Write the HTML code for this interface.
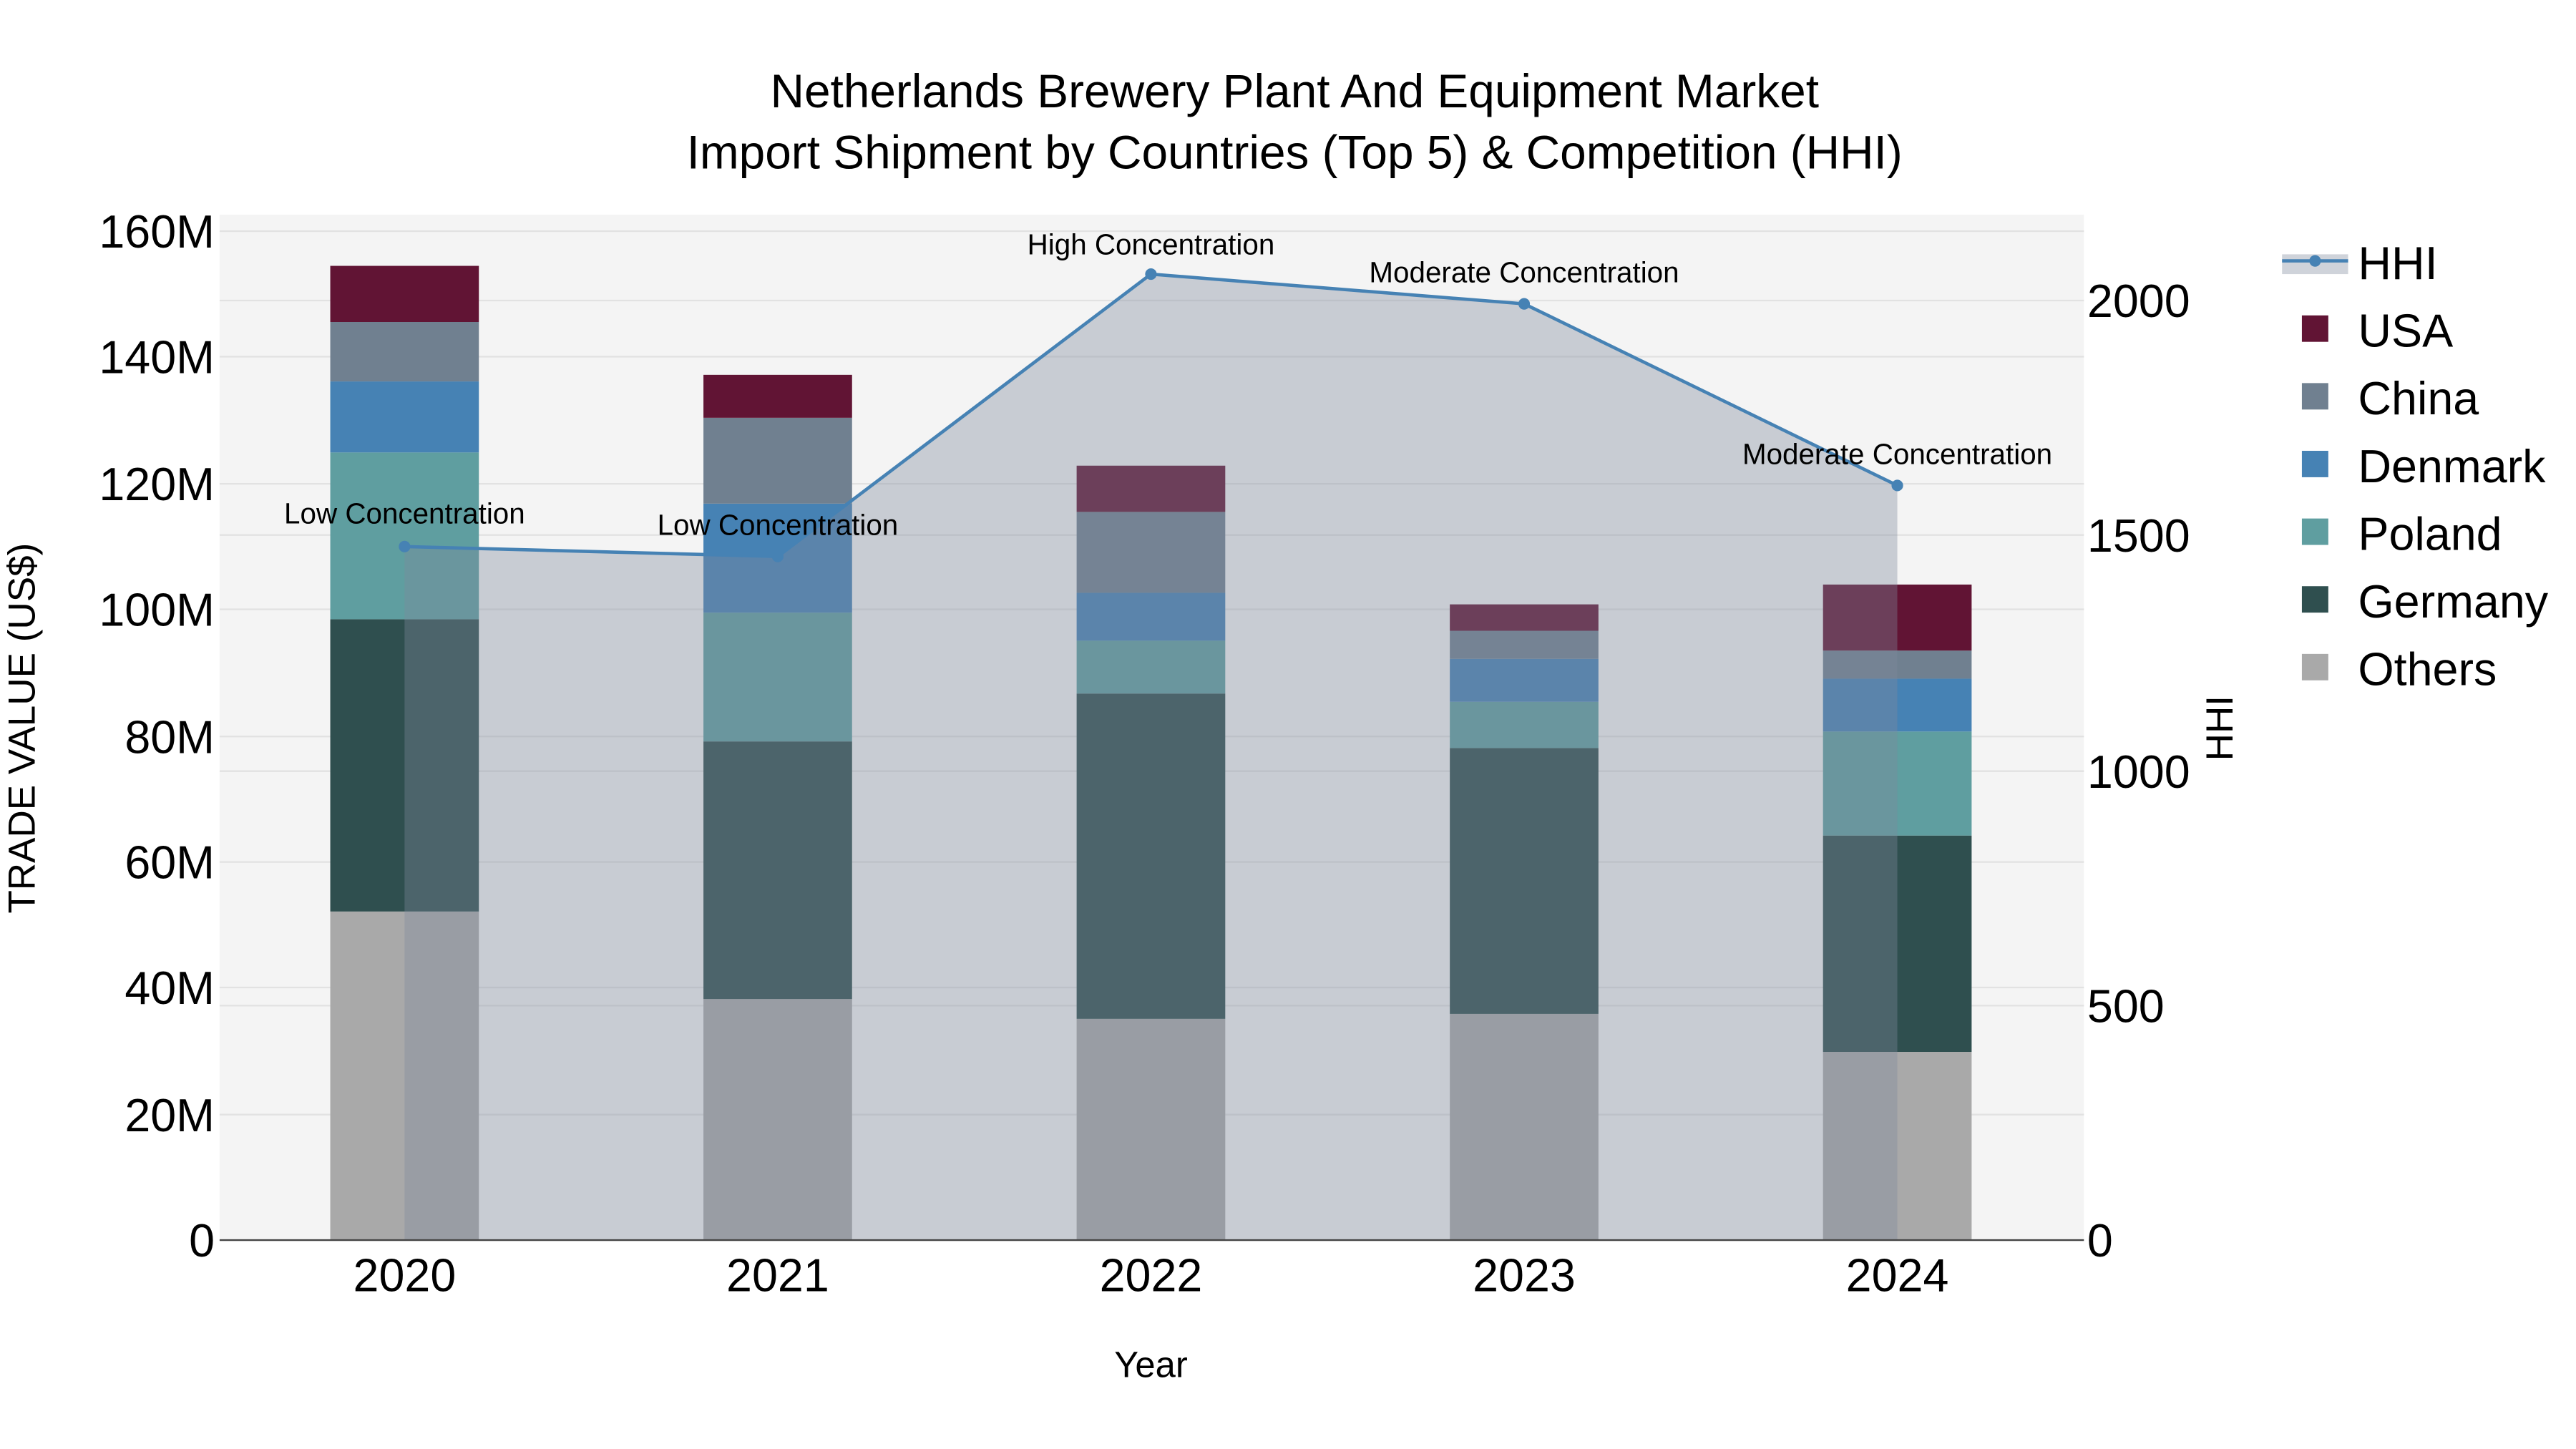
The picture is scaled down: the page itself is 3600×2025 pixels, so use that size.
<!DOCTYPE html>
<html><head><meta charset="utf-8"><style>html,body{margin:0;padding:0;background:#fff}svg{display:block}</style></head>
<body>
<svg width="3600" height="2025" viewBox="0 0 1560 877.5" xmlns="http://www.w3.org/2000/svg" font-family="Liberation Sans, sans-serif">
<rect x="0" y="0" width="1560" height="877.5" fill="#fff"/>
<rect x="133" y="130" width="1129" height="621" fill="#f4f4f4"/>
<g stroke="#e2e2e2" stroke-width="1">
<line x1="133" x2="1262" y1="675" y2="675"/><line x1="133" x2="1262" y1="598" y2="598"/><line x1="133" x2="1262" y1="522" y2="522"/><line x1="133" x2="1262" y1="446" y2="446"/><line x1="133" x2="1262" y1="369" y2="369"/><line x1="133" x2="1262" y1="293" y2="293"/><line x1="133" x2="1262" y1="216" y2="216"/><line x1="133" x2="1262" y1="140" y2="140"/>
<line x1="133" x2="1262" y1="609" y2="609"/><line x1="133" x2="1262" y1="467" y2="467"/><line x1="133" x2="1262" y1="324" y2="324"/><line x1="133" x2="1262" y1="182" y2="182"/>
</g>
<g>
<rect x="200" y="552" width="90" height="199" fill="#a9a9a9"/><rect x="200" y="375" width="90" height="177" fill="#2f4f4f"/><rect x="200" y="274" width="90" height="101" fill="#5f9ea0"/><rect x="200" y="231" width="90" height="43" fill="#4682b4"/><rect x="200" y="195" width="90" height="36" fill="#708090"/><rect x="200" y="161" width="90" height="34" fill="#611434"/>
<rect x="426" y="605" width="90" height="146" fill="#a9a9a9"/><rect x="426" y="449" width="90" height="156" fill="#2f4f4f"/><rect x="426" y="371" width="90" height="78" fill="#5f9ea0"/><rect x="426" y="305" width="90" height="66" fill="#4682b4"/><rect x="426" y="253" width="90" height="52" fill="#708090"/><rect x="426" y="227" width="90" height="26" fill="#611434"/>
<rect x="652" y="617" width="90" height="134" fill="#a9a9a9"/><rect x="652" y="420" width="90" height="197" fill="#2f4f4f"/><rect x="652" y="388" width="90" height="32" fill="#5f9ea0"/><rect x="652" y="359" width="90" height="29" fill="#4682b4"/><rect x="652" y="310" width="90" height="49" fill="#708090"/><rect x="652" y="282" width="90" height="28" fill="#611434"/>
<rect x="878" y="614" width="90" height="137" fill="#a9a9a9"/><rect x="878" y="453" width="90" height="161" fill="#2f4f4f"/><rect x="878" y="425" width="90" height="28" fill="#5f9ea0"/><rect x="878" y="399" width="90" height="26" fill="#4682b4"/><rect x="878" y="382" width="90" height="17" fill="#708090"/><rect x="878" y="366" width="90" height="16" fill="#611434"/>
<rect x="1104" y="637" width="90" height="114" fill="#a9a9a9"/><rect x="1104" y="506" width="90" height="131" fill="#2f4f4f"/><rect x="1104" y="443" width="90" height="63" fill="#5f9ea0"/><rect x="1104" y="411" width="90" height="32" fill="#4682b4"/><rect x="1104" y="394" width="90" height="17" fill="#708090"/><rect x="1104" y="354" width="90" height="40" fill="#611434"/>
</g>
<polygon points="245,751 245,331 471,337 697,166 923,184 1149,294 1149,751" fill="rgb(126,137,155)" fill-opacity="0.373"/>
<polyline points="245,331 471,337 697,166 923,184 1149,294" fill="none" stroke="#4682b4" stroke-width="2"/>
<g fill="#4682b4"><circle cx="245" cy="331" r="3.5"/><circle cx="471" cy="337" r="3.5"/><circle cx="697" cy="166" r="3.5"/><circle cx="923" cy="184" r="3.5"/><circle cx="1149" cy="294" r="3.5"/></g>
<line x1="133" x2="1262" y1="751" y2="751" stroke="#444" stroke-width="1"/>
<g font-size="17.5" fill="#000" text-anchor="middle">
<text x="245" y="317">Low Concentration</text><text x="471" y="324">Low Concentration</text><text x="697" y="154">High Concentration</text><text x="923" y="171">Moderate Concentration</text><text x="1149" y="281">Moderate Concentration</text>
</g>
<g font-size="28" fill="#000" text-anchor="end">
<text x="130" y="761">0</text><text x="130" y="685">20M</text><text x="130" y="608">40M</text><text x="130" y="532">60M</text><text x="130" y="456">80M</text><text x="130" y="379">100M</text><text x="130" y="303">120M</text><text x="130" y="226">140M</text><text x="130" y="150">160M</text>
</g>
<g font-size="28" fill="#000" text-anchor="start">
<text x="1264" y="761">0</text><text x="1264" y="619">500</text><text x="1264" y="477">1000</text><text x="1264" y="334">1500</text><text x="1264" y="192">2000</text>
</g>
<g font-size="28" fill="#000" text-anchor="middle">
<text x="245" y="782">2020</text><text x="471" y="782">2021</text><text x="697" y="782">2022</text><text x="923" y="782">2023</text><text x="1149" y="782">2024</text>
</g>
<text x="697" y="834" font-size="22" text-anchor="middle">Year</text>
<text transform="translate(21,441) rotate(-90)" font-size="23" text-anchor="middle">TRADE VALUE (US$)</text>
<text transform="translate(1352,441) rotate(-90)" font-size="23" text-anchor="middle">HHI</text>
<text x="784" y="65" font-size="28.5" text-anchor="middle">Netherlands Brewery Plant And Equipment Market</text>
<text x="784" y="102" font-size="28.5" text-anchor="middle">Import Shipment by Countries (Top 5) &amp; Competition (HHI)</text>
<rect x="1382" y="154" width="40" height="12" fill="rgb(126,137,155)" fill-opacity="0.373"/>
<line x1="1382" x2="1422" y1="158" y2="158" stroke="#4682b4" stroke-width="2"/><circle cx="1402" cy="158" r="3.5" fill="#4682b4"/>
<g>
<rect x="1394" y="191" width="16" height="16" fill="#611434"/><rect x="1394" y="232" width="16" height="16" fill="#708090"/><rect x="1394" y="273" width="16" height="16" fill="#4682b4"/><rect x="1394" y="314" width="16" height="16" fill="#5f9ea0"/><rect x="1394" y="355" width="16" height="16" fill="#2f4f4f"/><rect x="1394" y="396" width="16" height="16" fill="#a9a9a9"/>
</g>
<g font-size="28" fill="#000">
<text x="1428" y="169">HHI</text><text x="1428" y="210">USA</text><text x="1428" y="251">China</text><text x="1428" y="292">Denmark</text><text x="1428" y="333">Poland</text><text x="1428" y="374">Germany</text><text x="1428" y="415">Others</text>
</g>
</svg>
</body></html>
